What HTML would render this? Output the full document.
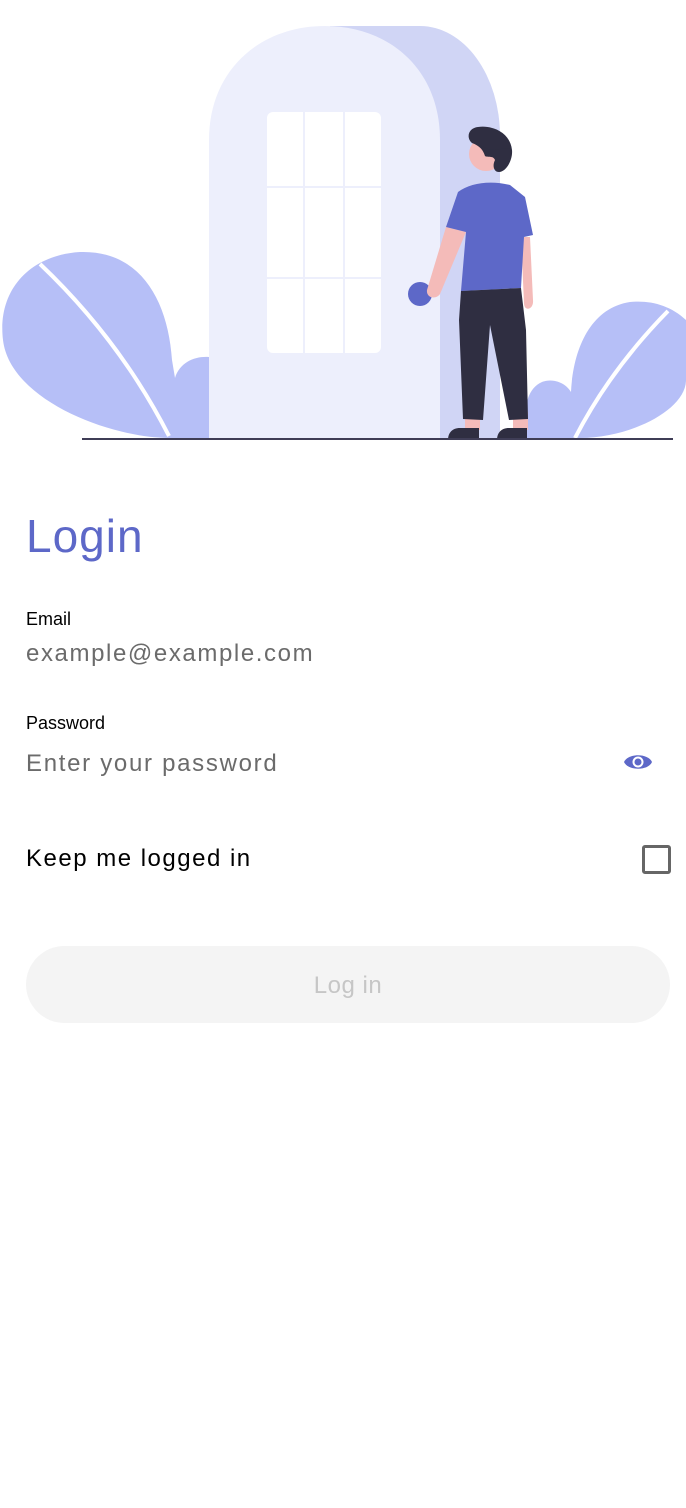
<!DOCTYPE html>
<html><head><meta charset="utf-8"><style>
html,body{margin:0;padding:0;background:#fff;width:686px;height:1508px;overflow:hidden;position:relative;font-family:"Liberation Sans",sans-serif}
.t{position:absolute;left:26px;line-height:1;white-space:nowrap}
</style></head><body>
<svg width="686" height="445" style="position:absolute;left:0;top:0" viewBox="0 0 686 445">
<path d="M330,26 H420 A80,110 0 0 1 500,136 V438 H330 Z" fill="#D0D5F5"/>
<path d="M209,438 V140 C209,70 260,26 325,26 C390,26 440,70 440,140 V438 Z" fill="#EDEFFC"/>
<rect x="267" y="112" width="114" height="241" rx="6" fill="#fff"/>
<g stroke="#EDEFFC" stroke-width="2"><line x1="304" y1="112" x2="304" y2="353"/><line x1="344" y1="112" x2="344" y2="353"/><line x1="267" y1="187" x2="381" y2="187"/><line x1="267" y1="278" x2="381" y2="278"/></g>
<path d="M170,438 C110,438 10,400 3,340 C-3,290 30,255 80,252 C140,250 168,300 172,360 L175,378 C180,362 195,356 209,357 L209,438 Z" fill="#B6BFF7"/>
<path d="M40,264 Q120,340 169,436" stroke="#fff" stroke-width="4" fill="none"/>
<path d="M580,438 C630,438 686,410 686,380 L686,320 C670,305 650,300 630,302 C590,308 573,350 571,392 C565,382 552,378 542,382 C528,388 525,405 525,420 L525,438 Z" fill="#B6BFF7"/>
<path d="M668,311 Q610,370 575,438" stroke="#fff" stroke-width="4" fill="none"/>
<ellipse cx="420" cy="294" rx="12" ry="12" fill="#5D68C8"/>
<path d="M446,227 L466,232 L440,294 C436,300 426,298 427,290 Z" fill="#F4BBB9"/>
<path d="M521,237 L530,237 L533,300 C534,310 524,312 524,303 Z" fill="#F4BBB9"/>
<rect x="465" y="412" width="15" height="18" fill="#F4BBB9"/>
<rect x="513" y="412" width="15" height="18" fill="#F4BBB9"/>
<circle cx="486" cy="154" r="17" fill="#F4BBB9"/>
<path d="M472,143 C466,138 468,128 478,127 C492,125 510,132 512,150 C513,160 506,172 499,172 C494,172 492,166 495,160 C493,155 488,158 485,156 C483,150 480,146 472,143 Z" fill="#2F2E41"/>
<path d="M470,140 C468,132 474,127 484,127 C496,128 508,136 511,148 L490,150 Z" fill="#2F2E41"/>
<path d="M458,192 C470,183 490,180 510,185 L525,197 L533,235 L524,237 L521,288 L461,291 L466,232 L446,227 Z" fill="#5D68C8"/>
<path d="M461,291 L521,288 L526,330 L528,419 L509,420 L490,325 L483,420 L463,419 L459,320 Z" fill="#2F2E41"/>
<path d="M448,440 C448,433 452,428 460,428 L479,428 L479,440 Z" fill="#2F2E41"/>
<path d="M497,440 C497,433 501,428 509,428 L527,428 L527,440 Z" fill="#2F2E41"/>
<rect x="82" y="438" width="591" height="2" fill="#3F3D56"/>
</svg>
<div class="t" style="top:513px;font-size:46px;color:#5D68C8;letter-spacing:1px">Login</div>
<div class="t" style="top:610px;font-size:18px;color:#000">Email</div>
<div class="t" style="top:642px;font-size:24px;color:#6b6b6b;letter-spacing:1.6px">example@example.com</div>
<div class="t" style="top:714px;font-size:18px;color:#000">Password</div>
<div class="t" style="top:752px;font-size:24px;color:#6b6b6b;letter-spacing:1.7px">Enter your password</div>
<svg width="30" height="20" viewBox="0 0 30 20" style="position:absolute;left:623px;top:752px">
<path d="M1,10 C5,1 25,1 29,10 C25,19 5,19 1,10 Z" fill="#5D68C8"/>
<circle cx="15" cy="10" r="5.5" fill="#fff"/><circle cx="15" cy="10" r="3.5" fill="#5D68C8"/>
</svg>
<div class="t" style="top:847px;font-size:24px;color:#000;letter-spacing:1.5px">Keep me logged in</div>
<div style="position:absolute;left:642px;top:845px;width:23px;height:23px;border:3px solid #666;border-radius:3px"></div>
<div style="position:absolute;left:26px;top:946px;width:644px;height:77px;border-radius:39px;background:#f4f4f4"></div>
<div style="position:absolute;left:26px;top:974px;width:644px;text-align:center;font-size:24px;line-height:1;color:#c6c6c6;letter-spacing:0.5px">Log in</div>
</body></html>
